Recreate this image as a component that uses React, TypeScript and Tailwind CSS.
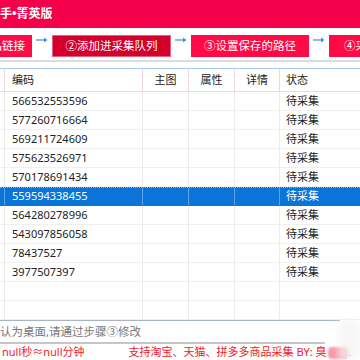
const font = "font-['Noto_Sans','Noto_Sans_CJK_SC',sans-serif]";

const codes = [
  "566532553596",
  "577260716664",
  "569211724609",
  "575623526971",
  "570178691434",
  "559594338455",
  "564280278996",
  "543097856058",
  "78437527",
  "3977507397",
];

const cols = "grid grid-cols-[5px_138px_46px_46px_45px_1fr]";

function Arrow() {
  return (
    <div className="flex w-[20px] shrink-0 items-center justify-center pt-[2px]">
      <svg width="12" height="6" viewBox="0 0 12 6">
        <path d="M0 3H10" stroke="#3d8fe0" strokeWidth="1.2" />
        <path d="M8 0.5L11.5 3L8 5.5Z" fill="#3d8fe0" />
      </svg>
    </div>
  );
}

function Step({ label, dark, w }: { label: string; dark?: boolean; w: string }) {
  return (
    <div
      className={`flex h-[22px] shrink-0 items-center justify-center whitespace-nowrap text-[11.5px] text-white ${w} ${
        dark ? "bg-[#d3002b] border border-[#e86080]" : "bg-[#ff0a45]"
      }`}
    >
      {label}
    </div>
  );
}

function Steps() {
  return (
    <div className="flex h-[32px] items-start overflow-hidden pt-[7px]">
      <div className="flex h-[22px] w-[32px] shrink-0 items-center justify-end overflow-hidden whitespace-nowrap bg-[#ff0a45] pr-[7px] text-[11.5px] text-white">
        ①粘贴商品链接
      </div>
      <Arrow />
      <Step label="②添加进采集队列" dark w="w-[119px]" />
      <Arrow />
      <Step label="③设置保存的路径" w="w-[118px]" />
      <Arrow />
      <div className="flex h-[22px] w-[119px] shrink-0 items-center whitespace-nowrap bg-[#ff0a45] pl-[15px] text-[11.5px] text-white">
        ④采集商品数据
      </div>
    </div>
  );
}

function Header() {
  const th = "flex items-center border-r border-[#f5d3dc]";
  return (
    <div className={`${cols} h-[23px] border-b border-[#f5d3dc] text-[11px] text-[#222]`}>
      <div className={th} />
      <div className={`${th} pl-[7px]`}>编码</div>
      <div className={`${th} justify-center`}>主图</div>
      <div className={`${th} justify-center`}>属性</div>
      <div className={`${th} justify-center`}>详情</div>
      <div className="flex items-center pl-[6px]">状态</div>
    </div>
  );
}

function Row({ code, selected }: { code?: string; selected?: boolean }) {
  const td = `flex items-center border-r ${selected ? "border-[#5ea3e6]" : "border-[#ececec]"}`;
  return (
    <div
      className={`${cols} h-[19px] border-b text-[11px] ${
        selected
          ? "bg-[#0a74d8] text-white border-[#0a74d8] border-t border-t-[#e89a3c] border-dotted"
          : "border-[#efefef] text-[#222]"
      }`}
    >
      <div className={td} />
      <div className={`${td} pl-[7px]`}>{code}</div>
      <div className={td} />
      <div className={td} />
      <div className={td} />
      <div className="flex items-center pl-[6px]">{code ? "待采集" : ""}</div>
    </div>
  );
}

export default function App() {
  return (
    <div className={`relative h-[360px] w-[360px] overflow-hidden bg-white ${font}`}>
      <div className="flex h-[28px] items-center bg-[#f5004a] text-[12px] font-bold text-white">
        手•箐英版
      </div>
      <Steps />
      <div className="h-[2px] bg-[#dcdcdc]" />
      <div className="h-[6px]" />
      <div className="h-[1px] bg-[#a9c9ea]" />
      <Header />
      {codes.map((c, i) => (
        <Row key={c} code={c} selected={i === 5} />
      ))}
      <Row />
      <Row />
      <div className="h-[1px] w-[340px] bg-[#a9b4c2]" />
      <div className="flex h-[23px] w-[325px] items-center border-b-2 border-[#c6c6c6] text-[11.5px] text-[#777]">
        认为桌面,请通过步骤③修改
      </div>
      <div className="flex h-[17px] items-center whitespace-nowrap text-[11px] text-[#f0202a]">
        <span className="pl-[2px]">null秒≈null分钟</span>
        <span className="ml-[44px]">支持淘宝、天猫、拼多多商品采集 BY: 臭</span>
        <span className="mx-[1px] h-[12px] w-[20px] rounded-sm bg-[#f89aa8] blur-[1px]" />
        <span>.</span>
      </div>
      <div className="absolute bottom-0 right-0 h-[40px] w-[22px] bg-[#f4f4f4] opacity-70 blur-[3px]" />
    </div>
  );
}
